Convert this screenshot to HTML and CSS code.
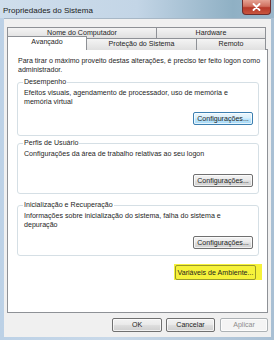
FILE: index.html
```html
<!DOCTYPE html>
<html>
<head>
	<title>Propriedades do Sistema</title>
	<link rel="stylesheet" href="styles.css">
</head>
<body>
	<div class="window">
		<div class="titlebar">
			<span class="title">Propriedades do Sistema</span>
			<span class="close">
				<svg width="9" height="8" viewBox="0 0 9 8"><path d="M1.5 1 L7.5 7 M7.5 1 L1.5 7" stroke="#fff" stroke-width="1.8" stroke-linecap="round"/></svg>
			</span>
		</div>
		<div class="client">
			<div class="tab-row">
				<div class="tab w-comp">Nome do Computador</div>
				<div class="tab w-hw">Hardware</div>
			</div>
			<div class="tab-row front">
				<div class="tab w-adv active">Avançado</div>
				<div class="tab w-prot">Proteção do Sistema</div>
				<div class="tab w-rem">Remoto</div>
			</div>
			<div class="panel">
				<p class="intro">Para tirar o máximo proveito destas alterações, é preciso ter feito logon como<br>administrador.</p>

				<div class="group g-perf">
					<span class="legend">Desempenho</span>
					<p class="desc">Efeitos visuais, agendamento de processador, uso de memória e memória virtual</p>
					<div class="actions">
						<button class="btn focus">Configurações...</button>
					</div>
				</div>

				<div class="group g-user">
					<span class="legend">Perfis de Usuário</span>
					<p class="desc">Configurações da área de trabalho relativas ao seu logon</p>
					<div class="actions">
						<button class="btn">Configurações...</button>
					</div>
				</div>

				<div class="group g-boot">
					<span class="legend">Inicialização e Recuperação</span>
					<p class="desc">Informações sobre inicialização do sistema, falha do sistema e depuração</p>
					<div class="actions">
						<button class="btn">Configurações...</button>
					</div>
				</div>

				<div class="env">
					<span class="marker"><button class="btn env-btn">Variáveis de Ambiente...</button></span>
				</div>
			</div>
			<div class="footer">
				<button class="btn b-ok">OK</button>
				<button class="btn b-cancel">Cancelar</button>
				<button class="btn b-apply" disabled>Aplicar</button>
			</div>
		</div>
	</div>
</body>
</html>
```

FILE: styles.css
```css
*{
	margin: 0;
	padding: 0;
	box-sizing: border-box;
	font-family: "Liberation Sans", Arial, sans-serif;
}
body{
	width: 274px;
	height: 340px;
	overflow: hidden;
	background: #b7cde3;
}
.window{
	width: 274px;
	height: 340px;
	display: flex;
	flex-direction: column;
	background: linear-gradient(to right, #bcd1e6 0%, #c9d9e9 40%, #a9c0d4 100%);
}
.titlebar{
	height: 18px;
	display: flex;
	align-items: flex-start;
	justify-content: space-between;
	background: linear-gradient(to right, #cfdeec 0%, #c3d5e6 50%, #8fb0c4 85%, #9cb7cb 100%);
}
.title{
	font-size: 8px;
	line-height: 9px;
	color: #1b1b1b;
	padding: 6px 0 0 3px;
}
.close{
	width: 29px;
	height: 15px;
	margin-right: 3px;
	border: 1px solid #6d2d2d;
	border-top: none;
	border-radius: 0 0 4px 4px;
	background: linear-gradient(to bottom, #e5a293 0%, #d0705f 45%, #b6392a 55%, #c8553f 100%);
	display: flex;
	align-items: center;
	justify-content: center;
}
.client{
	flex: 1;
	margin: 0 3px 3px 4px;
	background: #f0f0f0;
	padding: 8px 3px 0 3px;
	display: flex;
	flex-direction: column;
	border-top: 1px solid #a7b7c6;
}
.tab-row{
	display: flex;
	height: 11px;
	margin-right: 2px;
}
.tab-row.front{
	position: relative;
	z-index: 1;
	margin-bottom: -1px;
	height: 12px;
}
.tab{
	font-size: 7.1px;
	line-height: 10px;
	color: #1e1e1e;
	text-align: center;
	white-space: nowrap;
	border: 1px solid #8e9196;
	border-bottom: none;
	border-left: none;
	background: linear-gradient(to bottom, #f4f4f4, #e0e0e0);
}
.tab:first-child{
	border-left: 1px solid #8e9196;
}
.tab-row.front .tab{
	line-height: 11px;
}
.tab.active{
	background: #fff;
	margin-top: -2px;
	height: 14px;
	line-height: 11px;
	border-right: 1px solid #8e9196;
}
.w-comp{ width: 150px; }
.w-hw{ width: 109px; }
.w-adv{ width: 80px; }
.w-prot{ width: 110px; }
.w-rem{ width: 69px; }

.panel{
	height: 264px;
	background: #fff;
	border: 1px solid #8e9196;
	padding: 6px 8px 0 9px;
	display: flex;
	flex-direction: column;
}
.intro{
	font-size: 7.05px;
	line-height: 9px;
	color: #1e1e1e;
	white-space: nowrap;
	margin-left: 1px;
}
.group{
	border: 1px solid #d5dfe5;
	border-radius: 3px;
	padding: 0 5px 6px 5px;
	display: flex;
	flex-direction: column;
}
.g-perf{
	margin-top: 8px;
	height: 54px;
	padding-bottom: 10px;
}
.g-user{
	margin-top: 7px;
	height: 51px;
}
.g-boot{
	margin-top: 11px;
	height: 51px;
}
.legend{
	align-self: flex-start;
	font-size: 7.1px;
	line-height: 9px;
	color: #1e1e1e;
	background: #fff;
	padding: 0 1px;
	margin-top: -5px;
}
.desc{
	font-size: 7.1px;
	line-height: 9px;
	color: #1e1e1e;
	margin-top: 2px;
	padding-left: 1px;
	padding-right: 20px;
}
.actions{
	margin-top: auto;
	display: flex;
	justify-content: flex-end;
}
.btn{
	font-size: 7.1px;
	color: #1e1e1e;
	white-space: nowrap;
	height: 13px;
	width: 60px;
	border: 1px solid #707070;
	border-radius: 2px;
	background: linear-gradient(to bottom, #f2f2f2 0%, #ebebeb 45%, #dddddd 55%, #cfcfcf 100%);
	box-shadow: inset 0 0 0 1px rgba(255,255,255,.7);
}
.btn.focus{
	border-color: #3c7fb1;
	background: linear-gradient(to bottom, #eaf6fd 0%, #d9f0fc 45%, #bee6fd 55%, #a7d9f5 100%);
}
.env{
	margin: 8px -3px 0 0;
	display: flex;
	justify-content: flex-end;
}
.marker{
	display: inline-flex;
	background: #f6f23a;
	padding: 1px 6px 0 1px;
	height: 16px;
}
.env-btn{
	width: 81px;
	height: 15px;
	background: transparent;
	border-color: #9a9a2a;
	box-shadow: none;
}
.footer{
	display: flex;
	justify-content: flex-end;
	gap: 4px;
	padding-top: 5px;
}
.footer .btn{
	height: 14px;
}
.b-ok{ width: 50px; }
.b-cancel{ width: 49px; margin-right: 1px; }
.b-apply{
	width: 48px;
	color: #8d8d8d;
	border-color: #adb2b5;
	background: #f4f4f4;
}
```
